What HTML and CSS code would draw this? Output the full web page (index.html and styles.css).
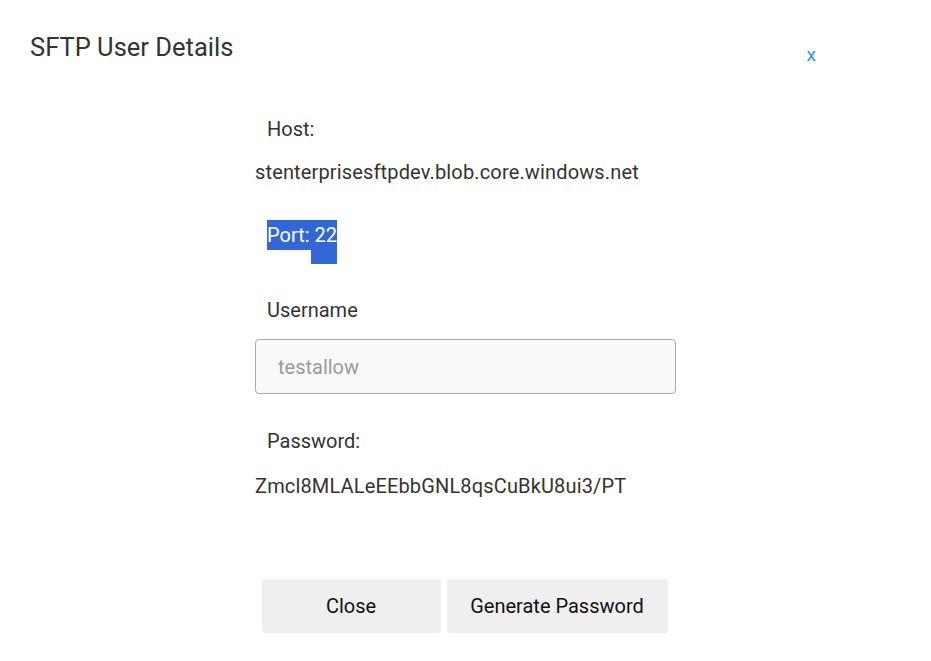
FILE: index.html
```html
<!DOCTYPE html>
<html lang="en">
<head>
    <meta charset="UTF-8">
    <meta name="viewport" content="width=device-width, initial-scale=1.0">
    <title>SFTP User Details</title>
    <link rel="stylesheet" href="styles.css">
</head>
<body>
    <div class="dialog">
        <div class="dialog-header">
            <h2 class="dialog-title">SFTP User Details</h2>
            <button class="close-x" type="button">x</button>
        </div>

        <div class="details">
            <div class="label">Host:</div>
            <div class="value">stenterprisesftpdev.blob.core.windows.net</div>

            <div class="label port"><span class="selected">Port: 22</span></div>

            <div class="label username">Username</div>
            <input type="text" class="field" placeholder="testallow" disabled>

            <div class="label password">Password:</div>
            <div class="value">Zmcl8MLALeEEbbGNL8qsCuBkU8ui3/PT</div>
        </div>

        <div class="actions">
            <button type="button" class="btn btn-close">Close</button>
            <button type="button" class="btn btn-generate">Generate Password</button>
        </div>
    </div>
</body>
</html>
```

FILE: styles.css
```css
body {
    font-family: 'Roboto', 'Liberation Sans', sans-serif;
    margin: 0;
    padding: 0;
    background-color: #ffffff;
    color: #333;
}
.dialog {
    width: 931px;
    height: 661px;
    box-sizing: border-box;
}
.dialog-header {
    display: flex;
    justify-content: space-between;
    align-items: flex-start;
    height: 62px;
    padding: 32px 115px 0 30px;
    box-sizing: border-box;
}
.dialog-title {
    margin: 0;
    font-size: 25.5px;
    font-weight: 400;
    line-height: 30px;
    color: #333;
}
.close-x {
    margin-top: 11px;
    padding: 0;
    border: none;
    background: none;
    font-family: inherit;
    font-size: 19px;
    line-height: 24px;
    color: #2196f3;
    cursor: pointer;
}
.details {
    width: 421px;
    margin: 55px auto 0;
}
.label {
    padding-left: 12px;
    font-size: 20px;
    line-height: 24px;
}
.value {
    margin-top: 19px;
    font-size: 20px;
    line-height: 24px;
    letter-spacing: 0.15px;
}
.port {
    margin-top: 36px;
    line-height: 30px;
}
.selected {
    position: relative;
    display: inline-block;
    background-color: #3367d6;
    color: #fff;
}
.selected::after {
    content: '';
    position: absolute;
    left: 44px;
    right: 0;
    top: 30px;
    height: 14px;
    background-color: #3367d6;
}
.username {
    margin-top: 48px;
}
.field {
    display: block;
    width: 100%;
    height: 55px;
    margin-top: 17px;
    padding: 0 22px;
    box-sizing: border-box;
    border: 1px solid #aaa;
    border-radius: 4px;
    background-color: #f9f9f9;
    font-family: inherit;
    font-size: 20px;
}
.field::placeholder {
    color: #999;
}
.password {
    margin-top: 35px;
}
.password + .value {
    margin-top: 21px;
}
.actions {
    display: flex;
    justify-content: center;
    gap: 6px;
    margin-top: 81px;
    padding-right: 2px;
}
.btn {
    height: 54px;
    border: none;
    border-radius: 3px;
    background-color: #efefef;
    font-family: inherit;
    font-size: 20px;
    color: #111;
    cursor: pointer;
}
.btn-close {
    width: 179px;
}
.btn-generate {
    width: 221px;
}
```
